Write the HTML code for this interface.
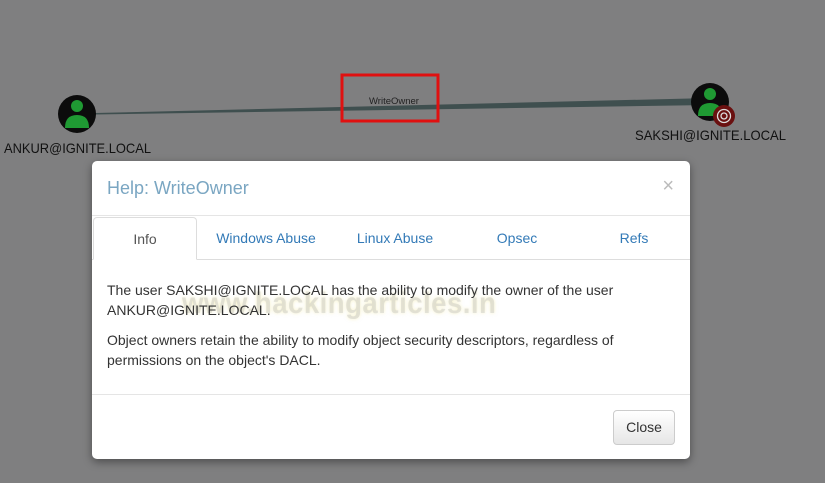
<!DOCTYPE html>
<html><head><style>
body{margin:0;width:825px;height:483px;background:#7f7f80;font-family:"Liberation Sans",sans-serif;position:relative;overflow:hidden}
.abs{position:absolute}
.modal{left:92px;top:161px;width:598px;height:298px;background:#fff;border-radius:5px;box-shadow:0 3px 9px rgba(0,0,0,.4)}
.tab{position:absolute;top:0;height:41px;line-height:42px;text-align:center;font-size:14px;color:#337ab7}
p{margin:0}
</style></head><body>
<svg class="abs" style="left:0;top:0" width="825" height="160">
<polygon points="95,113 710,98 710,105 95,114.5" fill="#3f4f4f"/>
<rect x="342" y="75" width="96" height="46" fill="none" stroke="#e01010" stroke-width="3"/>
<text x="394" y="104" font-size="9.5" text-anchor="middle" fill="#222" font-family="Liberation Sans">WriteOwner</text>
<circle cx="77" cy="114" r="19" fill="#0c0c0c"/>
<circle cx="77" cy="106" r="6" fill="#1f9a33"/>
<path d="M65,128 Q65,115 77,115 Q89,115 89,128 Z" fill="#1f9a33"/>
<circle cx="710" cy="102" r="19" fill="#0c0c0c"/>
<circle cx="710" cy="94" r="6" fill="#1f9a33"/>
<path d="M698,116 Q698,103 710,103 Q722,103 722,116 Z" fill="#1f9a33"/>
<circle cx="724" cy="116" r="11" fill="#6a1010"/>
<circle cx="724" cy="116" r="6.5" fill="none" stroke="#ddd" stroke-width="1.3"/>
<circle cx="724" cy="116" r="3" fill="none" stroke="#ddd" stroke-width="1.3"/>
<text x="4" y="153" font-size="14" fill="#111" font-family="Liberation Sans" textLength="147" lengthAdjust="spacingAndGlyphs">ANKUR@IGNITE.LOCAL</text>
<text x="635" y="140" font-size="14" fill="#111" font-family="Liberation Sans" textLength="151" lengthAdjust="spacingAndGlyphs">SAKSHI@IGNITE.LOCAL</text>
</svg>
<div class="abs modal">
<div class="abs" style="left:15px;top:17px;font-size:18px;color:#7aa6c2">Help: WriteOwner</div>
<div class="abs" style="right:16px;top:14px;font-size:20px;color:#bbb">×</div>
<div class="abs" style="left:0;top:54px;width:598px;border-top:1px solid #e5e5e5"></div>
<div class="abs" style="left:0;top:56px;width:598px;height:42px;border-bottom:1px solid #ddd">
<div class="tab" style="left:1px;width:102px;border:1px solid #ddd;border-bottom:1px solid #fff;border-radius:4px 4px 0 0;color:#555;background:#fff">Info</div>
<div class="tab" style="left:105px;width:138px">Windows Abuse</div>
<div class="tab" style="left:245px;width:116px">Linux Abuse</div>
<div class="tab" style="left:365px;width:120px">Opsec</div>
<div class="tab" style="left:487px;width:110px">Refs</div>
</div>
<div class="abs" style="left:90px;top:126px;font-size:30px;font-weight:bold;color:rgba(205,205,200,.55);text-shadow:0 0 4px rgba(240,230,150,.5);letter-spacing:0.5px;white-space:nowrap;transform:scaleX(0.92);transform-origin:left">www.hackingarticles.in</div>
<div class="abs" style="left:15px;top:119px;width:540px;font-size:14px;line-height:20px;color:#333">
<p>The user SAKSHI@IGNITE.LOCAL has the ability to modify the owner of the user ANKUR@IGNITE.LOCAL.</p>
<p style="margin-top:10px">Object owners retain the ability to modify object security descriptors, regardless of permissions on the object's DACL.</p>
</div>
<div class="abs" style="left:0;top:233px;width:598px;border-top:1px solid #e5e5e5"></div>
<div class="abs" style="left:521px;top:249px;width:60px;height:33px;border:1px solid #ccc;border-radius:4px;background:linear-gradient(#fff,#e6e6e6);font-size:14px;line-height:33px;text-align:center;color:#333">Close</div>
</div>
</body></html>
